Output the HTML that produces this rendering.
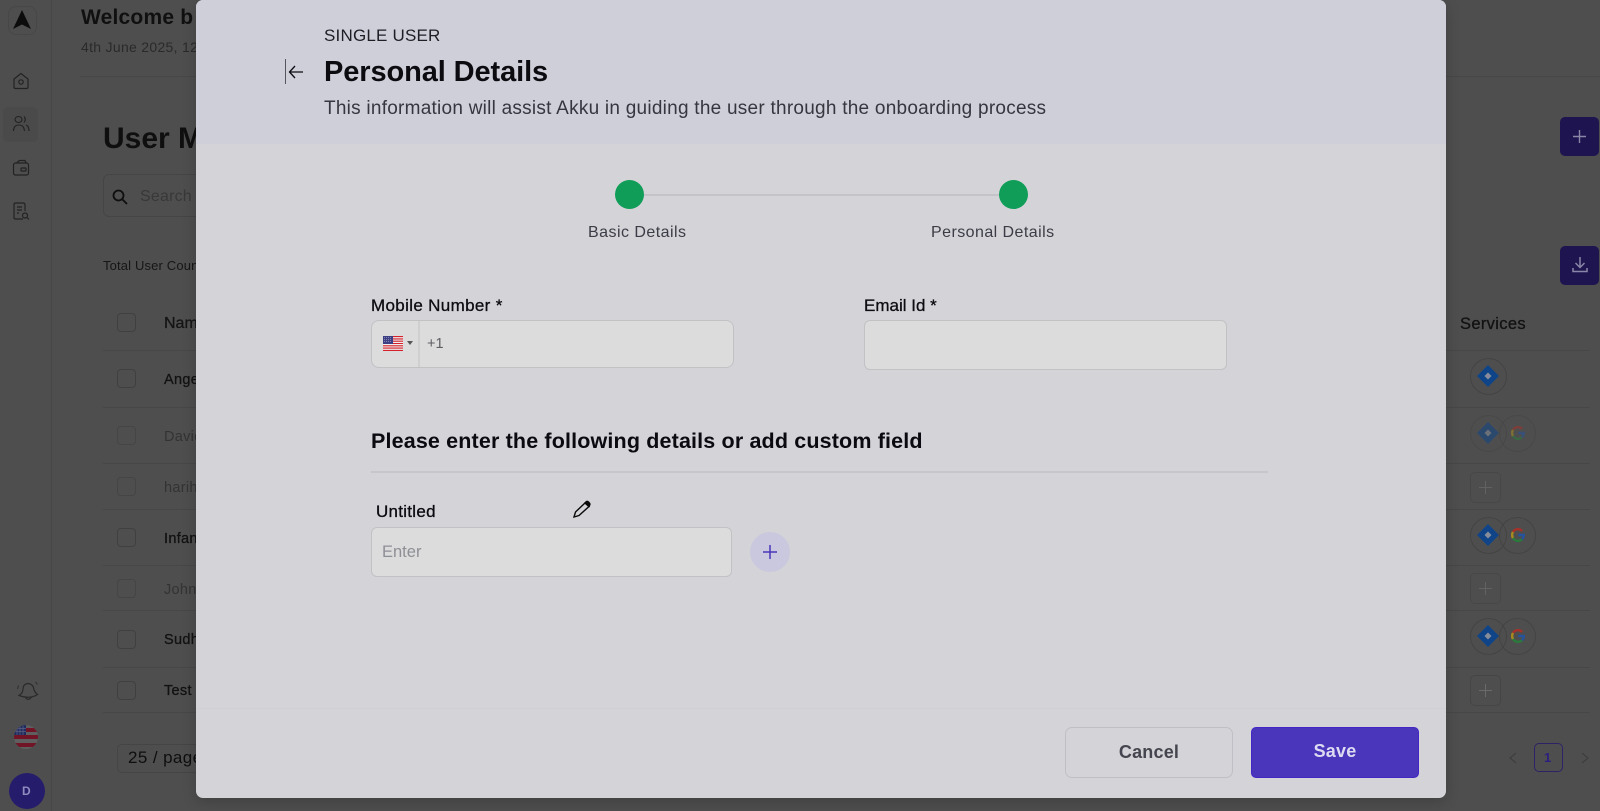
<!DOCTYPE html>
<html lang="en"><head><meta charset="utf-8"><title>Personal Details</title>
<style>
html,body{margin:0;padding:0;width:1600px;height:811px;overflow:hidden;background:#4e4e4e}
body{font-family:"Liberation Sans",sans-serif;position:relative}
.a{position:absolute}
.t{position:absolute;white-space:nowrap;line-height:1}
.line{position:absolute;height:1px;background:#474747}
.cb{position:absolute;left:117px;width:17px;height:17px;border:1px solid #404040;border-radius:4px}
.ic{position:absolute;width:35px;height:35px;border:1px solid #444;border-radius:50%}
.pb{position:absolute;left:1470px;width:29px;height:29px;border:1px solid #454545;border-radius:5px}
.pb:after{content:"";position:absolute;left:8px;top:14px;width:13px;height:1px;background:#6a6a6a}
.pb:before{content:"";position:absolute;left:14px;top:8px;width:1px;height:13px;background:#6a6a6a}
.m{-webkit-text-stroke:.3px currentColor}
</style></head><body>

<!-- background page -->
<div class="a" style="left:51px;top:0;width:1px;height:811px;background:#474747"></div>
<div class="a" style="left:8px;top:6px;width:27px;height:27px;border:1px solid #474747;border-radius:8px"></div>
<svg class="a" style="left:12px;top:9px" width="20" height="21" viewBox="0 0 20 21"><path d="M10 1 L19 20 L10 15.500 L1 20Z" fill="#0c0c0c"/></svg>
<div class="a" style="left:3px;top:107px;width:35px;height:35px;background:#4a4a4a;border-radius:5px"></div>
<svg class="a" style="left:11px;top:71px" width="20" height="20" viewBox="0 0 20 20" fill="none" stroke="#222" stroke-width="1.200"><path d="M3 8 L10 2.500 L17 8 V16 Q17 17.500 15.500 17.500 H4.500 Q3 17.500 3 16Z"/><circle cx="10" cy="11" r="2.200"/></svg>
<svg class="a" style="left:11px;top:114px" width="20" height="20" viewBox="0 0 20 20" fill="none" stroke="#222" stroke-width="1.100"><ellipse cx="7.500" cy="5.500" rx="3.500" ry="3"/><path d="M2.500 17 Q2.500 11 8 11 Q13 11 13.500 17"/><path d="M13 2.500 Q15.500 5.500 13 8.500"/><path d="M15 11 Q18 12 18 17"/></svg>
<svg class="a" style="left:11px;top:158px" width="20" height="20" viewBox="0 0 20 20" fill="none" stroke="#222" stroke-width="1.200"><rect x="2.500" y="5" width="15" height="12" rx="2"/><path d="M6 5 Q7 2.500 10 2.500 H14 L15 5"/><rect x="10" y="10" width="5" height="3" rx=".5"/></svg>
<svg class="a" style="left:11px;top:201px" width="20" height="20" viewBox="0 0 20 20" fill="none" stroke="#222" stroke-width="1.200"><path d="M12 18 H4.500 Q3 18 3 16.500 V3.500 Q3 2 4.500 2 H12 Q14 2 14 4 V10"/><path d="M6 6h5M6 9h5M6 12h2"/><circle cx="14" cy="14.500" r="2.500"/><path d="M16 16.500 L18 18.500"/></svg>
<svg class="a" style="left:16px;top:679px" width="24" height="24" viewBox="0 0 24 24" fill="none" stroke="#2a2a2a" stroke-width="1.200"><path d="M3 16.500 Q7 14 7 10 Q7 5.500 11.500 4.500 Q16 4.500 17.500 8.500 Q18 13 21.500 15.500 Q14 20.500 3 16.500Z"/><path d="M9.500 18.500 Q12.500 22.500 15.500 18"/><path d="M1.500 10 L2.500 6.500M19.500 3 L21.500 5.500" stroke="#333"/></svg>
<svg class="a" style="left:14px;top:725px" width="24" height="24" viewBox="0 0 24 24"><defs><clipPath id="c"><circle cx="12" cy="12" r="12"/></clipPath></defs><g clip-path="url(#c)"><rect width="24" height="24" fill="#5f5f5f"/><path d="M12 3h12v4H12zM0 10h24v4H0zM0 18h24v4H0z" fill="#701426"/><rect width="12" height="10" fill="#1f2c60"/><path d="M3 1v9M6 1v9M9 1v9M1 3.500h11M1 6.500h11" stroke="#606080" stroke-width=".8"/></g></svg>
<div class="a" style="left:9px;top:773px;width:36px;height:36px;border-radius:50%;background:#251c6b"></div>
<div class="t" style="left:22px;top:785px;font-size:12px;font-weight:700;color:#908cc0">D</div>

<div class="t" style="left:81px;top:7px;font-size:21px;font-weight:700;color:#101010;letter-spacing:.2px">Welcome b</div>
<div class="t" style="left:81px;top:40px;font-size:14px;color:#2a2a2a;letter-spacing:.3px">4th June 2025, 12</div>
<div class="line" style="left:80px;top:76px;width:1520px"></div>
<div class="t" style="left:103px;top:124px;font-size:30px;font-weight:700;color:#0f0f0f">User M</div>
<div class="a" style="left:103px;top:174px;width:120px;height:41px;border:1px solid #454545;border-radius:6px"></div>
<svg class="a" style="left:111px;top:188px" width="19" height="19" viewBox="0 0 19 19" fill="none" stroke="#0e0e0e" stroke-width="1.800"><circle cx="7.500" cy="7.500" r="5"/><path d="M11.500 11.500 L16 16"/></svg>
<div class="t" style="left:140px;top:189px;font-size:16px;color:#383838;letter-spacing:.2px">Search</div>
<div class="t" style="left:103px;top:259px;font-size:13px;color:#161616;letter-spacing:.15px">Total User Count</div>
<div class="line" style="left:103px;top:350px;width:1487px"></div>
<div class="line" style="left:103px;top:407px;width:1487px"></div>
<div class="line" style="left:103px;top:463px;width:1487px"></div>
<div class="line" style="left:103px;top:509px;width:1487px"></div>
<div class="line" style="left:103px;top:565px;width:1487px"></div>
<div class="line" style="left:103px;top:610px;width:1487px"></div>
<div class="line" style="left:103px;top:667px;width:1487px"></div>
<div class="line" style="left:103px;top:712px;width:1487px"></div>
<div class="cb" style="top:313px"></div><div class="cb" style="top:369px"></div><div class="cb" style="top:426px;opacity:.6"></div><div class="cb" style="top:477px;opacity:.6"></div><div class="cb" style="top:528px"></div><div class="cb" style="top:579px;opacity:.6"></div><div class="cb" style="top:630px"></div><div class="cb" style="top:681px"></div>
<div class="t m" style="left:164px;top:316px;font-size:16px;color:#151515">Name</div>
<div class="t m" style="left:164px;top:373px;font-size:14.500px;color:#121212;letter-spacing:.3px">Angel</div>
<div class="t" style="left:164px;top:430px;font-size:14.500px;color:#333;letter-spacing:.3px">David</div>
<div class="t" style="left:164px;top:481px;font-size:14.500px;color:#333;letter-spacing:.3px">harihar</div>
<div class="t m" style="left:164px;top:532px;font-size:14.500px;color:#121212;letter-spacing:.3px">Infant</div>
<div class="t" style="left:164px;top:583px;font-size:14.500px;color:#333;letter-spacing:.3px">John</div>
<div class="t m" style="left:164px;top:633px;font-size:14.500px;color:#121212;letter-spacing:.3px">Sudhir</div>
<div class="t m" style="left:164px;top:684px;font-size:14.500px;color:#121212;letter-spacing:.3px">Test</div>
<div class="a" style="left:117px;top:744px;width:90px;height:27px;border:1px solid #454545;border-radius:5px"></div>
<div class="t" style="left:128px;top:749px;font-size:17px;color:#0e0e0e;letter-spacing:.4px">25 / page</div>

<div class="a" style="left:1560px;top:117px;width:39px;height:39px;background:#1e144f;border-radius:5px"></div>
<svg class="a" style="left:1572px;top:129px" width="15" height="15" viewBox="0 0 15 15" stroke="#8a86a8" stroke-width="1.400"><path d="M1 7.500H14M7.500 1V14"/></svg>
<div class="a" style="left:1560px;top:246px;width:39px;height:39px;background:#1e144f;border-radius:5px"></div>
<svg class="a" style="left:1571px;top:256px" width="18" height="18" viewBox="0 0 18 18" fill="none" stroke="#8a86a8" stroke-width="1.500"><path d="M9 1 V11 M4.500 7 L9 11.500 L13.500 7 M2 12 V15.500 H16 V12"/></svg>
<div class="t m" style="left:1460px;top:316px;font-size:16.500px;color:#121212;letter-spacing:.33px">Services</div>

<!-- service icons row 1 -->
<div class="ic" style="left:1470px;top:358px"></div>
<svg class="a" style="left:1477px;top:365px" width="22" height="22" viewBox="0 0 22 22"><path d="M11 0 L22 11 L11 22 L0 11Z" fill="#0f4488"/><path d="M11 7.500 L14.500 11 L11 14.500 L7.500 11Z" fill="#868c9a"/></svg>
<!-- row 2 faded -->
<div style="opacity:.55">
<div class="ic" style="left:1470px;top:415px"></div><div class="ic" style="left:1499px;top:415px"></div>
<svg class="a" style="left:1477px;top:422px" width="22" height="22" viewBox="0 0 22 22"><path d="M11 0 L22 11 L11 22 L0 11Z" fill="#0f4488"/><path d="M11 7.500 L14.500 11 L11 14.500 L7.500 11Z" fill="#868c9a"/></svg>
<svg class="a" style="left:1511px;top:426px" width="14" height="14" viewBox="0 0 14 14" fill="none" stroke-width="2.400"><path d="M11.100 2.900 A5.800 5.800 0 0 0 2 4" stroke="#a5322a"/><path d="M2 4 A5.800 5.800 0 0 0 2 10" stroke="#a68a1f"/><path d="M2 10 A5.800 5.800 0 0 0 11 11.200" stroke="#2a7a3c"/><path d="M11 11.200 A5.800 5.800 0 0 0 12.800 7 H7.200" stroke="#27529c"/></svg>
</div>
<div class="pb" style="top:472px;opacity:.7"></div>
<!-- row 4 -->
<div class="ic" style="left:1470px;top:517px"></div><div class="ic" style="left:1499px;top:517px"></div>
<svg class="a" style="left:1477px;top:524px" width="22" height="22" viewBox="0 0 22 22"><path d="M11 0 L22 11 L11 22 L0 11Z" fill="#0f4488"/><path d="M11 7.500 L14.500 11 L11 14.500 L7.500 11Z" fill="#868c9a"/></svg>
<svg class="a" style="left:1511px;top:528px" width="14" height="14" viewBox="0 0 14 14" fill="none" stroke-width="2.400"><path d="M11.100 2.900 A5.800 5.800 0 0 0 2 4" stroke="#a5322a"/><path d="M2 4 A5.800 5.800 0 0 0 2 10" stroke="#a68a1f"/><path d="M2 10 A5.800 5.800 0 0 0 11 11.200" stroke="#2a7a3c"/><path d="M11 11.200 A5.800 5.800 0 0 0 12.800 7 H7.200" stroke="#27529c"/></svg>
<div class="pb" style="top:573px;opacity:.7"></div>
<!-- row 6 -->
<div class="ic" style="left:1470px;top:618px"></div><div class="ic" style="left:1499px;top:618px"></div>
<svg class="a" style="left:1477px;top:625px" width="22" height="22" viewBox="0 0 22 22"><path d="M11 0 L22 11 L11 22 L0 11Z" fill="#0f4488"/><path d="M11 7.500 L14.500 11 L11 14.500 L7.500 11Z" fill="#868c9a"/></svg>
<svg class="a" style="left:1511px;top:629px" width="14" height="14" viewBox="0 0 14 14" fill="none" stroke-width="2.400"><path d="M11.100 2.900 A5.800 5.800 0 0 0 2 4" stroke="#a5322a"/><path d="M2 4 A5.800 5.800 0 0 0 2 10" stroke="#a68a1f"/><path d="M2 10 A5.800 5.800 0 0 0 11 11.200" stroke="#2a7a3c"/><path d="M11 11.200 A5.800 5.800 0 0 0 12.800 7 H7.200" stroke="#27529c"/></svg>
<div class="pb" style="top:675px"></div>
<!-- pager -->
<svg class="a" style="left:1508px;top:751px" width="10" height="14" viewBox="0 0 10 14" fill="none" stroke="#3e3e3e" stroke-width="1.200"><path d="M8 2 L2 7 L8 12"/></svg>
<div class="a" style="left:1534px;top:743px;width:27px;height:27px;border:1px solid #2b2366;border-radius:5px"></div>
<div class="t" style="left:1544px;top:751px;font-size:13px;font-weight:700;color:#2b1f80">1</div>
<svg class="a" style="left:1580px;top:751px" width="10" height="14" viewBox="0 0 10 14" fill="none" stroke="#3e3e3e" stroke-width="1.200"><path d="M2 2 L8 7 L2 12"/></svg>

<!-- modal -->
<div class="a" style="left:196px;top:0;width:1250px;height:798px;background:#d3d3d8;border-radius:7px;box-shadow:0 4px 14px rgba(0,0,0,.18);overflow:hidden">
  <div class="a" style="left:0;top:0;width:1250px;height:144px;background:#cecfd9"></div>
  <div class="a" style="left:0;top:708px;width:1250px;height:1px;background:#cfcfd4"></div>
</div>

<div class="t" style="left:324px;top:27px;font-size:17px;color:#1e1e24;letter-spacing:.2px">SINGLE USER</div>
<div class="a" style="left:285px;top:59px;width:1px;height:25px;background:#55555c"></div>
<svg class="a" style="left:286px;top:63px" width="18" height="18" viewBox="0 0 18 18" fill="none" stroke="#0b0b10" stroke-width="1.300"><path d="M17 9 H3.500 M9 3 L3.500 9 L9 15"/></svg>
<div class="t" style="left:324px;top:58px;font-size:29px;font-weight:700;color:#0b0b10;letter-spacing:-.1px">Personal Details</div>
<div class="t" style="left:324px;top:99px;font-size:19px;color:#36363f;letter-spacing:.25px">This information will assist Akku in guiding the user through the onboarding process</div>

<!-- stepper -->
<div class="a" style="left:644px;top:194px;width:355px;height:2px;background:#c3c3ca"></div>
<div class="a" style="left:615px;top:180px;width:29px;height:29px;border-radius:50%;background:#0f9d58"></div>
<div class="a" style="left:999px;top:180px;width:29px;height:29px;border-radius:50%;background:#0f9d58"></div>
<div class="t" style="left:588px;top:225px;font-size:16px;color:#3c3c46;letter-spacing:.46px">Basic Details</div>
<div class="t" style="left:931px;top:225px;font-size:16px;color:#3c3c46;letter-spacing:.44px">Personal Details</div>

<!-- mobile -->
<div class="t m" style="left:371px;top:297px;font-size:17px;color:#0d0d12;letter-spacing:.34px">Mobile Number *</div>
<div class="a" style="left:371px;top:320px;width:361px;height:46px;background:#dcdcdc;border:1px solid #c2c2c5;border-radius:8px;overflow:hidden">
  <div class="a" style="left:0;top:0;width:46px;height:46px;border-right:2px solid #cfcfd0"></div>
</div>
<svg class="a" style="left:383px;top:336px" width="20" height="15" viewBox="0 0 20 15"><rect width="20" height="15" fill="#ededed"/><path d="M0 .6h20M0 2.900h20M0 5.200h20M0 7.500h20M0 9.800h20M0 12.100h20M0 14.400h20" stroke="#d6202a" stroke-width="1.100"/><rect width="10" height="8" fill="#3c3f83"/><path d="M1 1.500h8M1 3.500h8M1 5.500h8" stroke="#9a9bc4" stroke-width=".7" stroke-dasharray="1 1"/></svg>
<svg class="a" style="left:407px;top:341px" width="6" height="4" viewBox="0 0 6 4"><path d="M0 0H6L3 4Z" fill="#555"/></svg>
<div class="t" style="left:427px;top:337px;font-size:14.500px;color:#5f5f64">+1</div>

<!-- email -->
<div class="t m" style="left:864px;top:297px;font-size:17px;color:#0d0d12">Email Id *</div>
<div class="a" style="left:864px;top:320px;width:361px;height:48px;background:#dcdcdc;border:1px solid #c2c2c5;border-radius:6px"></div>

<!-- section -->
<div class="t" style="left:371px;top:431px;font-size:21.500px;font-weight:700;color:#0a0a10;letter-spacing:.15px">Please enter the following details or add custom field</div>
<div class="a" style="left:371px;top:471px;width:897px;height:2px;background:#c6c6cc"></div>

<!-- custom -->
<div class="t m" style="left:376px;top:503px;font-size:17px;color:#0a0a10;letter-spacing:.27px">Untitled</div>
<svg class="a" style="left:572px;top:500px" width="20" height="19" viewBox="0 0 20 19" fill="none" stroke="#0a0a0a" stroke-width="1.400"><path d="M2 17 L3.500 12 L13 3 L17 6.500 L7 15.500Z"/><path d="M13 3 L14.500 1.500 Q15.500 1 16.500 2 L17.800 3.500 Q18.300 4.500 17.500 5.500 L17 6.500Z" fill="#0a0a0a"/></svg>
<div class="a" style="left:371px;top:527px;width:359px;height:48px;background:#dcdcdc;border:1px solid #c2c2c5;border-radius:6px"></div>
<div class="t" style="left:382px;top:544px;font-size:16.500px;color:#8e8f96">Enter</div>
<div class="a" style="left:750px;top:532px;width:40px;height:40px;border-radius:50%;background:#c9c8de"></div>
<svg class="a" style="left:763px;top:545px" width="14" height="14" viewBox="0 0 14 14" stroke="#4a35bc" stroke-width="1.500"><path d="M0 7H14M7 0V14"/></svg>

<!-- footer -->
<div class="a" style="left:1065px;top:727px;width:166px;height:49px;border:1px solid #bfbfc5;border-radius:7px"></div>
<div class="t" style="left:1065px;top:743px;width:168px;text-align:center;font-size:18px;font-weight:700;color:#45454f;letter-spacing:.2px">Cancel</div>
<div class="a" style="left:1251px;top:727px;width:166px;height:49px;background:#4936bb;border:1px solid #4326c4;border-radius:5px"></div>
<div class="t" style="left:1251px;top:742px;width:168px;text-align:center;font-size:18px;font-weight:700;color:#dddaf2;letter-spacing:.2px">Save</div>
</body></html>
